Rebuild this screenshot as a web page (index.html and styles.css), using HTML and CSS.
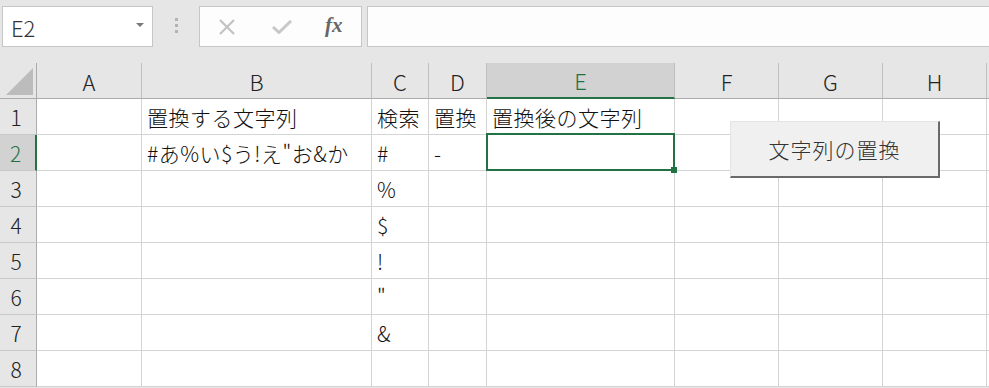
FILE: index.html
```html
<!DOCTYPE html>
<html lang="ja">
<head>
    <meta charset="UTF-8">
    <title>文字列の置換</title>
    <link rel="stylesheet" href="styles.css">
</head>
<body>
    <div class="toolbar">
        <div class="name-box">
            <span class="name-text">E2</span>
            <span class="name-arrow"></span>
        </div>
        <div class="grip"><i></i><i></i><i></i></div>
        <div class="fx-box">
            <svg class="tool-icon" width="18" height="16" viewBox="0 0 18 16">
                <path d="M2 1 L16 15 M16 1 L2 15" stroke="#c2c2c2" stroke-width="2.2" fill="none"/>
            </svg>
            <svg class="tool-icon" width="20" height="14" viewBox="0 0 20 14">
                <path d="M1 7 L7 12.5 L19 1" stroke="#c8c8c8" stroke-width="3" fill="none"/>
            </svg>
            <span class="fx">fx</span>
        </div>
        <div class="formula"></div>
    </div>

    <div class="sheet">
        <div class="corner"><span class="corner-tri"></span></div>
        <div class="col-head">A</div>
        <div class="col-head">B</div>
        <div class="col-head">C</div>
        <div class="col-head">D</div>
        <div class="col-head active">E</div>
        <div class="col-head">F</div>
        <div class="col-head">G</div>
        <div class="col-head">H</div>
        <div class="col-head edge"></div>

        <div class="row-head">1</div>
        <div class="cell"></div>
        <div class="cell">置換する文字列</div>
        <div class="cell">検索</div>
        <div class="cell">置換</div>
        <div class="cell">置換後の文字列</div>
        <div class="cell"></div><div class="cell"></div><div class="cell"></div><div class="cell"></div>

        <div class="row-head active">2</div>
        <div class="cell"></div>
        <div class="cell">#あ%い$う!え"お&amp;か</div>
        <div class="cell">#</div>
        <div class="cell">-</div>
        <div class="cell selected"></div>
        <div class="cell"></div><div class="cell"></div><div class="cell"></div><div class="cell"></div>

        <div class="row-head">3</div>
        <div class="cell"></div><div class="cell"></div>
        <div class="cell">%</div>
        <div class="cell"></div><div class="cell"></div><div class="cell"></div><div class="cell"></div><div class="cell"></div><div class="cell"></div>

        <div class="row-head">4</div>
        <div class="cell"></div><div class="cell"></div>
        <div class="cell">$</div>
        <div class="cell"></div><div class="cell"></div><div class="cell"></div><div class="cell"></div><div class="cell"></div><div class="cell"></div>

        <div class="row-head">5</div>
        <div class="cell"></div><div class="cell"></div>
        <div class="cell">!</div>
        <div class="cell"></div><div class="cell"></div><div class="cell"></div><div class="cell"></div><div class="cell"></div><div class="cell"></div>

        <div class="row-head">6</div>
        <div class="cell"></div><div class="cell"></div>
        <div class="cell">"</div>
        <div class="cell"></div><div class="cell"></div><div class="cell"></div><div class="cell"></div><div class="cell"></div><div class="cell"></div>

        <div class="row-head">7</div>
        <div class="cell"></div><div class="cell"></div>
        <div class="cell">&amp;</div>
        <div class="cell"></div><div class="cell"></div><div class="cell"></div><div class="cell"></div><div class="cell"></div><div class="cell"></div>

        <div class="row-head">8</div>
        <div class="cell"></div><div class="cell"></div><div class="cell"></div>
        <div class="cell"></div><div class="cell"></div><div class="cell"></div><div class="cell"></div><div class="cell"></div><div class="cell"></div>

        <button class="macro-button">文字列の置換</button>
    </div>
</body>
</html>
```

FILE: styles.css
```css
body {
    margin: 0;
    background-color: #e6e6e6;
    font-family: "Noto Sans CJK JP", "Noto Sans", sans-serif;
    color: #222;
    overflow: hidden;
}
.toolbar {
    display: flex;
    align-items: flex-start;
    height: 63px;
    padding: 6px 0 0 2px;
    box-sizing: border-box;
}
.name-box {
    width: 151px;
    height: 41px;
    box-sizing: border-box;
    border: 1px solid #c6c6c6;
    background: #fff;
    display: flex;
    align-items: center;
    justify-content: space-between;
    padding: 0 8px 0 8px;
}
.name-text {
    font-size: 22px;
    font-weight: 300;
    color: #333;
    line-height: 1;
}
.name-arrow {
    width: 0;
    height: 0;
    border-left: 4px solid transparent;
    border-right: 4px solid transparent;
    border-top: 4px solid #777;
    margin-top: -4px;
}
.grip {
    width: 46px;
    display: flex;
    flex-direction: column;
    align-items: center;
    gap: 3px;
    padding-top: 12px;
}
.grip i {
    display: block;
    width: 3px;
    height: 3px;
    background: #b3b3b3;
}
.fx-box {
    width: 163px;
    height: 41px;
    box-sizing: border-box;
    border: 1px solid #c6c6c6;
    background: #fdfdfd;
    display: flex;
    align-items: center;
    padding-left: 18px;
    gap: 36px;
}
.fx {
    font-family: "Liberation Serif", serif;
    font-style: italic;
    font-weight: bold;
    font-size: 21px;
    color: #666;
    margin-left: -3px;
    margin-top: -3px;
}
.formula {
    flex: 1;
    height: 41px;
    margin-left: 5px;
    margin-right: -4px;
    box-sizing: border-box;
    border: 1px solid #c6c6c6;
    background: #fdfdfd;
}
.sheet {
    position: relative;
    display: grid;
    grid-template-columns: 37px 105px 230px 57px 58px 188px 104px 104px 104px 1fr;
    grid-template-rows: 36px repeat(8, 36px);
    background: #fff;
}
.corner {
    background: #e6e6e6;
    border-right: 1px solid #ababab;
    border-bottom: 1px solid #ababab;
    position: relative;
}
.corner-tri {
    position: absolute;
    right: 3px;
    bottom: 3px;
    width: 0;
    height: 0;
    border-left: 27px solid transparent;
    border-bottom: 27px solid #bcbcbc;
}
.col-head {
    background: #e6e6e6;
    border-right: 1px solid #bfbfbf;
    border-bottom: 1px solid #ababab;
    display: flex;
    align-items: center;
    justify-content: center;
    font-size: 22px;
    font-weight: 300;
    color: #222;
}
.col-head.active {
    background: #d2d2d2;
    color: #217346;
    border-bottom: 2px solid #217346;
}
.col-head.edge {
    border-right: none;
}
.row-head {
    background: #e6e6e6;
    border-right: 1px solid #ababab;
    border-bottom: 1px solid #c8c8c8;
    display: flex;
    align-items: center;
    justify-content: center;
    padding-right: 4px;
    font-size: 21px;
    font-weight: 300;
    color: #222;
}
.row-head.active {
    background: #d2d2d2;
    color: #217346;
    border-right: 2px solid #217346;
}
.cell {
    border-right: 1px solid #d4d4d4;
    border-bottom: 1px solid #d4d4d4;
    display: flex;
    align-items: center;
    padding-left: 5px;
    font-size: 21px;
    font-weight: 300;
    letter-spacing: 0.5px;
    color: #111;
    white-space: nowrap;
    overflow: visible;
}
.cell.selected {
    position: relative;
}
.cell.selected::before {
    content: "";
    position: absolute;
    top: -2px;
    left: -1px;
    right: -1px;
    bottom: -1px;
    border: 2px solid #217346;
}
.cell.selected::after {
    content: "";
    position: absolute;
    right: -3px;
    bottom: -3px;
    width: 6px;
    height: 6px;
    background: #217346;
}
.macro-button {
    position: absolute;
    left: 730px;
    top: 58px;
    width: 210px;
    height: 57px;
    background: #f0f0f0;
    border: 1px solid #e4e4e4;
    border-right: 2px solid #6a6a6a;
    border-bottom: 2px solid #6a6a6a;
    font-family: "Noto Sans CJK JP", sans-serif;
    font-size: 21px;
    font-weight: 300;
    letter-spacing: 1px;
    color: #333;
    padding: 0;
}
```
